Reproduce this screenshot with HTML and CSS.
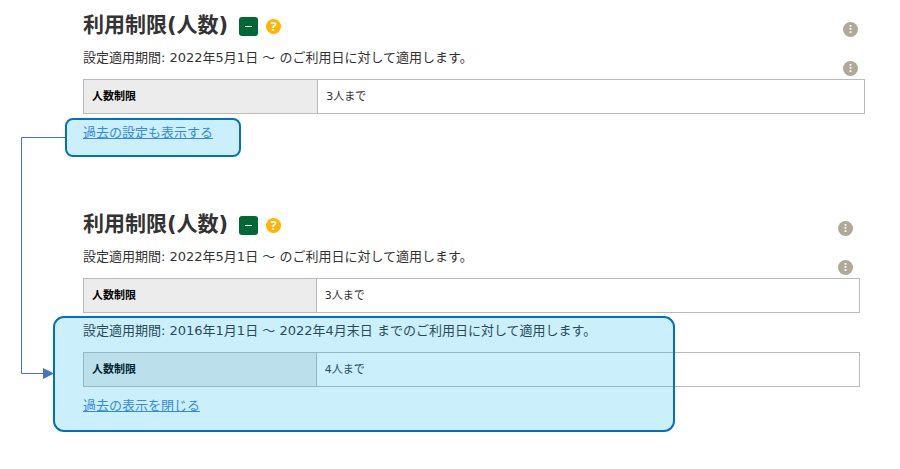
FILE: index.html
```html
<!DOCTYPE html>
<html lang="ja">
<head>
    <meta charset="UTF-8">
    <meta name="viewport" content="width=device-width, initial-scale=1.0">
    <title>利用制限(人数)</title>
    <link rel="stylesheet" href="styles.css">
</head>
<body>

<section class="limit before">
    <div class="title-row">
        <h2>利用制限(人数)</h2>
        <button class="collapse-button" aria-label="閉じる"></button>
        <button class="help-button" aria-label="ヘルプ">?</button>
        <button class="menu-button" aria-label="メニュー"><svg viewBox="0 0 15 15"><path d="M6.6 3h1.8v1.7H6.6zM6.6 6.1h1.8v1.7H6.6zM6.6 9.2h1.8v1.7H6.6z"/></svg></button>
    </div>
    <div class="period-row">
        <p>設定適用期間: 2022年5月1日 〜 のご利用日に対して適用します。</p>
        <button class="menu-button" aria-label="メニュー"><svg viewBox="0 0 15 15"><path d="M6.6 3h1.8v1.7H6.6zM6.6 6.1h1.8v1.7H6.6zM6.6 9.2h1.8v1.7H6.6z"/></svg></button>
    </div>
    <table>
        <tr><th scope="row">人数制限</th><td>3人まで</td></tr>
    </table>
    <div class="link-row">
        <a href="#past">過去の設定も表示する</a>
        <div class="callout callout-link"></div>
    </div>
</section>

<section class="limit after">
    <div class="title-row">
        <h2>利用制限(人数)</h2>
        <button class="collapse-button" aria-label="閉じる"></button>
        <button class="help-button" aria-label="ヘルプ">?</button>
        <button class="menu-button" aria-label="メニュー"><svg viewBox="0 0 15 15"><path d="M6.6 3h1.8v1.7H6.6zM6.6 6.1h1.8v1.7H6.6zM6.6 9.2h1.8v1.7H6.6z"/></svg></button>
    </div>
    <div class="period-row">
        <p>設定適用期間: 2022年5月1日 〜 のご利用日に対して適用します。</p>
        <button class="menu-button" aria-label="メニュー"><svg viewBox="0 0 15 15"><path d="M6.6 3h1.8v1.7H6.6zM6.6 6.1h1.8v1.7H6.6zM6.6 9.2h1.8v1.7H6.6z"/></svg></button>
    </div>
    <table>
        <tr><th scope="row">人数制限</th><td>3人まで</td></tr>
    </table>
    <div class="past" id="past">
        <div class="period-row">
            <p>設定適用期間: 2016年1月1日 〜 2022年4月末日 までのご利用日に対して適用します。</p>
        </div>
        <table>
            <tr><th scope="row">人数制限</th><td>4人まで</td></tr>
        </table>
        <div class="link-row">
            <a href="#">過去の表示を閉じる</a>
        </div>
        <div class="callout callout-past"></div>
    </div>
</section>

<!-- Arrow from the link to the opened block -->
<svg class="connector" width="34" height="250" viewBox="0 0 34 250">
    <path d="M45 7.5H1.5V243.5H24" fill="none" stroke="#4472c4"/>
    <path d="M23 238L34 243.500L23 249z" fill="#4472c4"/>
</svg>

</body>
</html>
```
FILE: styles.css
```css
body {
    position: relative;
    margin: 0;
    padding-top: 7px;
    padding-bottom: 40px;
    background-color: white;
    color: #333;
    font-family: "DejaVu Sans", "Noto Sans CJK JP", sans-serif;
    font-size: 13px;
    line-height: 20px;
}

h2,
p {
    margin: 0;
}

h2 {
    font-size: 21px;
    line-height: 36px;
}

button {
    padding: 0;
    border: none;
    cursor: pointer;
}

a {
    color: #3e83dd;
}

.limit {
    padding-left: 83px;
}

.before {
    padding-right: 35px;
}

.after {
    margin-top: 63px;
    padding-right: 40px;
}

.title-row {
    display: flex;
    align-items: center;
    height: 36px;
    margin-bottom: 5px;
}

.collapse-button {
    display: flex;
    align-items: center;
    justify-content: center;
    width: 19px;
    height: 19px;
    margin-left: 11px;
    margin-top: 3px;
    border-radius: 3px;
    background-color: #006837;
}

.collapse-button::before {
    content: "";
    width: 7px;
    height: 1px;
    background-color: white;
}

.help-button {
    width: 15px;
    height: 15px;
    margin-left: 8px;
    margin-top: 3px;
    border-radius: 50%;
    background-color: #ffb400;
    color: white;
    font: bold 13px/15px "Noto Sans", sans-serif;
}

.menu-button {
    flex: none;
    align-self: flex-end;
    width: 15px;
    height: 15px;
    margin-left: auto;
    margin-right: 7px;
    margin-bottom: 6px;
    border-radius: 50%;
    background-color: #b0a999;
}

.menu-button svg {
    display: block;
    fill: white;
}

.period-row {
    display: flex;
    height: 31px;
}

.period-row .menu-button {
    margin-bottom: 3px;
}

table {
    width: 100%;
    border-collapse: collapse;
    font-size: 11px;
}

th,
td {
    height: 33px;
    padding: 0 8px;
    border: 1px solid #bbb;
    text-align: left;
}

th {
    width: 30%;
    box-sizing: border-box;
    background-color: #ececec;
    color: black;
}

.link-row {
    position: relative;
    padding-top: 9px;
}

.past {
    position: relative;
    padding-top: 8px;
}

/* Highlight boxes lie over the page */
.callout {
    position: absolute;
    box-sizing: border-box;
    border: 2px solid #0070c0;
    background-color: rgba(0, 176, 240, 0.2);
    background-clip: padding-box;
    pointer-events: none;
}

.callout-link {
    top: 4px;
    left: -18px;
    width: 176px;
    height: 39px;
    border-radius: 8px;
}

.callout-past {
    top: 3px;
    bottom: -16px;
    left: -30px;
    width: 80%;
    border-radius: 11px;
}

.connector {
    position: absolute;
    top: 130px;
    left: 20px;
    overflow: visible;
    pointer-events: none;
}
```
